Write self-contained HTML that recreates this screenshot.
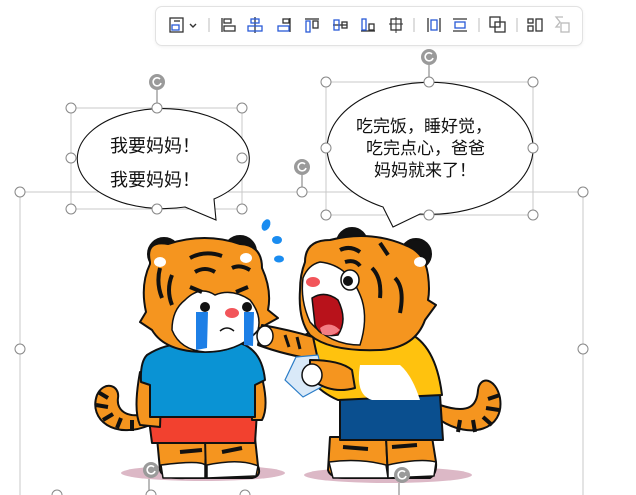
<!DOCTYPE html>
<html><head><meta charset="utf-8"><style>
html,body{margin:0;padding:0;background:#fff;width:636px;height:495px;overflow:hidden;font-family:"Liberation Sans","Noto Sans CJK SC",sans-serif}
.tb{position:absolute;left:155px;top:6px;width:426px;height:38px;border:1px solid #e2e2e2;border-radius:7px;background:#fff;box-shadow:0 1px 3px rgba(0,0,0,.06)}
svg{position:absolute;left:0;top:0}
.t{position:absolute;font-size:18px;color:#111;white-space:nowrap;line-height:1}
</style></head><body>
<div class="tb"></div>
<svg width="636" height="495" viewBox="0 0 636 495">
<g fill="none" stroke="#333" stroke-width="1.3">
 <rect x="170" y="18" width="13" height="14"/><rect x="172" y="25" width="7" height="5" stroke="#2a5bd7"/><path d="M174 21h6"/>
 <path d="M190 24l3 3 3-3" stroke-width="1.4"/>
 <path d="M209 18v14" stroke="#ccc"/>
 <path d="M222 18v14"/><rect x="224" y="19" width="7" height="4"/><rect x="224" y="26" width="11" height="5"/>
 <g stroke="#2a5bd7"><path d="M255 17v16" stroke="#333"/><rect x="251" y="19" width="8" height="4"/><rect x="248" y="26" width="14" height="5"/></g>
 <path d="M290 18v14"/><rect x="283" y="19" width="6" height="4"/><rect x="278" y="26" width="11" height="5" stroke="#2a5bd7"/>
 <path d="M305 19h14"/><rect x="306" y="21" width="4" height="11" stroke="#2a5bd7"/><rect x="313" y="21" width="5" height="7"/>
 <path d="M333 25h14"/><rect x="334" y="20" width="5" height="10" stroke="#2a5bd7"/><rect x="342" y="22" width="5" height="6"/>
 <path d="M361 31h14"/><rect x="362" y="19" width="4" height="11" stroke="#2a5bd7"/><rect x="369" y="24" width="5" height="6"/>
 <rect x="391" y="19" width="10" height="11"/><path d="M396 17v16M389 24h14" stroke-width="1"/>
 <path d="M414 18v14" stroke="#ccc"/>
 <path d="M428 18v14M440 18v14"/><rect x="431" y="20" width="6" height="10" stroke="#2a5bd7"/>
 <path d="M453 19h14M453 31h14"/><rect x="455" y="22" width="10" height="6" stroke="#2a5bd7"/>
 <path d="M479 18v14" stroke="#ccc"/>
 <rect x="490" y="17" width="10" height="10"/><rect x="495" y="22" width="10" height="10"/>
 <path d="M517 18v14" stroke="#ccc"/>
 <rect x="528" y="19" width="5" height="4"/><rect x="528" y="26" width="5" height="5"/><rect x="536" y="19" width="6" height="12"/>
 <g stroke="#bbb"><path d="M563 17h-7l4 5-4 5h4"/><rect x="561" y="23" width="8" height="9"/></g>
</g>
<g fill="none" stroke="#c8c8c8" stroke-width="1">
 <rect x="71" y="108" width="171" height="101"/>
 <rect x="326" y="82" width="207" height="133"/>
 <rect x="20" y="192" width="563" height="320"/>
 <path d="M157 90v18M429 65v17M302 175v17M149 478v15M399 482v13" stroke="#777"/>
</g>
<g fill="#fff" stroke="#111" stroke-width="1.1">
 <path d="M185 207 L216 220 L214 199 A86 50 0 1 0 185 207 Z"/>
 <path d="M383 207 L393 227 L420 214 A103 66 0 1 0 383 207 Z"/>
</g>
<ellipse cx="203" cy="473" rx="82" ry="8" fill="#dcb8c6"/>
<ellipse cx="388" cy="475" rx="84" ry="8" fill="#dcb8c6"/>
<!-- LEFT TIGER -->
<g stroke="#111" stroke-width="2" stroke-linejoin="round">
 <path d="M150 425 C115 440 88 420 97 395 C104 380 120 385 118 398 C116 412 130 420 150 412" fill="#f5951f"/>
 <path d="M98 392l10 6M96 405l12 2M103 420l10-6M117 428l4-10M132 431l0-11" stroke-width="4"/>
 <path d="M157 438 L160 470 Q162 479 185 478 L205 478 L206 438 Z" fill="#f5951f"/>
 <path d="M205 438 L206 478 L252 478 Q262 476 258 466 L255 438 Z" fill="#f5951f"/>
 <path d="M161 465 Q200 460 205 465 L205 478 L163 478 Z M207 465 Q240 458 258 466 L256 476 L207 478Z" fill="#fff" stroke-width="1.5"/>
 <path d="M180 452l22 -2M222 452l20-4" stroke-width="4"/>
 <path d="M148 412 L152 443 L255 443 L257 412 Z" fill="#f2412f"/>
 <path d="M140 372 Q133 410 140 425 L160 427 L162 372 Z" fill="#f5951f"/>
 <path d="M260 370 Q270 405 262 420 L252 420 L250 370Z" fill="#f5951f"/>
 <path d="M147 355 Q170 340 200 345 L240 343 Q262 350 265 380 L255 385 L255 417 L150 417 L150 385 L141 382 Q140 362 147 355Z" fill="#0a93d4"/>
 <circle cx="164" cy="254" r="16" fill="#111"/><circle cx="240" cy="252" r="16" fill="#111"/>
 <path d="M150 262 Q145 240 168 244 Q205 232 240 244 Q262 245 262 268 Q272 290 268 310 L278 318 L260 328 Q240 352 205 352 Q165 352 152 330 L140 322 L146 312 Q140 285 150 264Z" fill="#f5951f"/>
 <ellipse cx="160" cy="262" rx="6" ry="5" fill="#fff" stroke="none"/><ellipse cx="246" cy="258" rx="6" ry="5" fill="#fff" stroke="none"/>
 <path d="M185 300 Q200 285 215 295 Q232 288 250 300 Q262 315 258 330 Q240 352 205 352 Q180 350 172 330 Q172 310 185 300Z" fill="#fff" stroke-width="1.5"/>
 <path d="M190 258 q15 -8 32 -2 M195 272 q10 -6 20 0 M232 268 q8-4 18 2 M172 275 q-6 15 0 30 M160 268 q-4 15 2 30 M190 287 l12 5 M248 287 l-12 5" stroke-width="4" fill="none"/>
 <circle cx="205" cy="307" r="5" fill="#111" stroke="none"/><circle cx="247" cy="307" r="5" fill="#111" stroke="none"/>
 <path d="M196 312 L208 312 L207 348 L196 350Z M244 312 L254 312 L253 346 L244 345Z" fill="#1d7fe6" stroke="none"/>
 <ellipse cx="232" cy="313" rx="7" ry="5" fill="#f2555a" stroke="none"/>
 <path d="M220 331 q7 -6 14 0" fill="none" stroke-width="1.5"/>
</g>
<!-- RIGHT TIGER -->
<g stroke="#111" stroke-width="2" stroke-linejoin="round">
 <path d="M440 420 C470 440 505 430 500 398 C496 378 480 375 478 390 C477 405 470 415 440 405" fill="#f5951f"/>
 <path d="M500 395l-12 4M499 410l-13 -2M492 425l-9-8M475 432l-2-12M458 432l2-12" stroke-width="4"/>
 <path d="M330 437 L328 470 Q330 478 345 478 L388 478 L386 437Z" fill="#f5951f"/>
 <path d="M386 437 L388 478 L430 478 Q437 474 436 462 L432 437Z" fill="#f5951f"/>
 <path d="M329 462 Q360 458 386 465 L388 478 L333 478Z M388 465 Q420 458 436 462 L434 476 L388 478Z" fill="#fff" stroke-width="1.5"/>
 <path d="M343 447l25 2M392 447l25 -2" stroke-width="4"/>
 <path d="M340 395 L340 440 L443 440 L440 395Z" fill="#0a4f8f"/>
 <path d="M305 335 Q330 320 360 330 L400 330 Q435 338 442 395 L338 400 Q315 390 305 370Z" fill="#ffc20e"/>
 <path d="M360 365 Q355 395 372 400 L420 400 Q412 375 400 365Z" fill="#fff" stroke="none"/>
 <path d="M313 337 Q290 330 262 325 L258 345 Q285 355 318 360Z" fill="#f5951f"/>
 <ellipse cx="265" cy="336" rx="8" ry="10" fill="#fff" stroke-width="1.5"/>
 <path d="M285 335 l4 12 M297 337 l3 12" stroke-width="3"/>
 <path d="M296 357 L318 355 L325 385 L303 397 L285 380Z" fill="#d9e9f8" stroke="#2a7cc7" stroke-width="1.2"/>
 <path d="M310 360 Q340 360 352 370 L355 388 Q330 395 310 378Z" fill="#f5951f"/>
 <ellipse cx="312" cy="375" rx="10" ry="11" fill="#fff" stroke-width="1.5"/>
 <circle cx="352" cy="243" r="15" fill="#111"/><circle cx="416" cy="254" r="15" fill="#111"/>
 <path d="M305 262 Q305 240 330 240 Q370 230 405 245 Q425 252 428 275 Q430 290 428 300 L436 305 L425 320 Q415 348 380 350 Q330 352 310 335 Q298 320 300 290 Q300 275 305 262Z" fill="#f5951f"/>
 <ellipse cx="420" cy="262" rx="6" ry="5" fill="#fff" stroke="none"/>
 <path d="M303 278 Q300 300 310 322 Q330 345 360 345 Q368 320 362 300 Q350 265 320 262 Q308 265 303 278Z" fill="#fff" stroke-width="1.5"/>
 <path d="M312 298 Q325 290 338 300 Q348 320 338 335 Q320 338 315 325Z" fill="#b8121b" stroke-width="1.5"/>
 <path d="M320 328 Q330 320 340 330 Q332 338 322 334Z" fill="#f37d84" stroke="none"/>
 <ellipse cx="350" cy="280" rx="9" ry="10" fill="#fff" stroke-width="1.5"/><circle cx="348" cy="281" r="5" fill="#111" stroke="none"/>
 <ellipse cx="313" cy="282" rx="7" ry="5" fill="#f2555a" stroke="none"/>
 <path d="M340 250 q10 -5 20 2 M345 262 q10 -3 15 4 M372 268 q10 10 8 30 M395 278 q10 10 5 35 M380 243 l8 12" stroke-width="4" fill="none"/>
</g>
<g fill="#1a8cf0"><ellipse cx="266" cy="225" rx="4" ry="6" transform="rotate(25 266 225)"/><ellipse cx="277" cy="240" rx="5" ry="4"/><ellipse cx="279" cy="259" rx="5" ry="3.5"/></g>
<g fill="#fff" stroke="#888" stroke-width="1">
 <circle cx="71" cy="108" r="5"/><circle cx="157" cy="108" r="5"/><circle cx="242" cy="108" r="5"/>
 <circle cx="71" cy="158" r="5"/><circle cx="242" cy="158" r="5"/>
 <circle cx="71" cy="209" r="5"/><circle cx="157" cy="209" r="5"/><circle cx="242" cy="209" r="5"/>
 <circle cx="326" cy="82" r="5"/><circle cx="429" cy="82" r="5"/><circle cx="533" cy="82" r="5"/>
 <circle cx="326" cy="148" r="5"/><circle cx="533" cy="148" r="5"/>
 <circle cx="326" cy="215" r="5"/><circle cx="429" cy="215" r="5"/><circle cx="533" cy="215" r="5"/>
 <circle cx="20" cy="192" r="5"/><circle cx="302" cy="192" r="5"/><circle cx="583" cy="192" r="5"/>
 <circle cx="20" cy="349" r="5"/><circle cx="583" cy="349" r="5"/>
 <circle cx="57" cy="495" r="5"/><circle cx="151" cy="495" r="5"/><circle cx="245" cy="495" r="5"/>
</g>
<g fill="#9a9a9a">
 <circle cx="157" cy="82" r="8"/><circle cx="429" cy="57" r="8"/><circle cx="302" cy="167" r="8"/><circle cx="151" cy="470" r="8"/><circle cx="402" cy="475" r="8"/>
</g>
<g fill="none" stroke="#fff" stroke-width="1.6">
 <path d="M160 79a4 4 0 1 0 1 4"/><path d="M432 54a4 4 0 1 0 1 4"/><path d="M305 164a4 4 0 1 0 1 4"/><path d="M154 467a4 4 0 1 0 1 4"/><path d="M405 472a4 4 0 1 0 1 4"/>
</g>
</svg>
<div class="t" style="left:110px;top:137px">我要妈妈！</div>
<div class="t" style="left:110px;top:171px">我要妈妈！</div>
<div class="t" style="left:356px;top:118px;font-size:17px">吃完饭，睡好觉，</div>
<div class="t" style="left:366px;top:140px;font-size:17px">吃完点心，爸爸</div>
<div class="t" style="left:374px;top:162px;font-size:17px">妈妈就来了！</div>
</body></html>
